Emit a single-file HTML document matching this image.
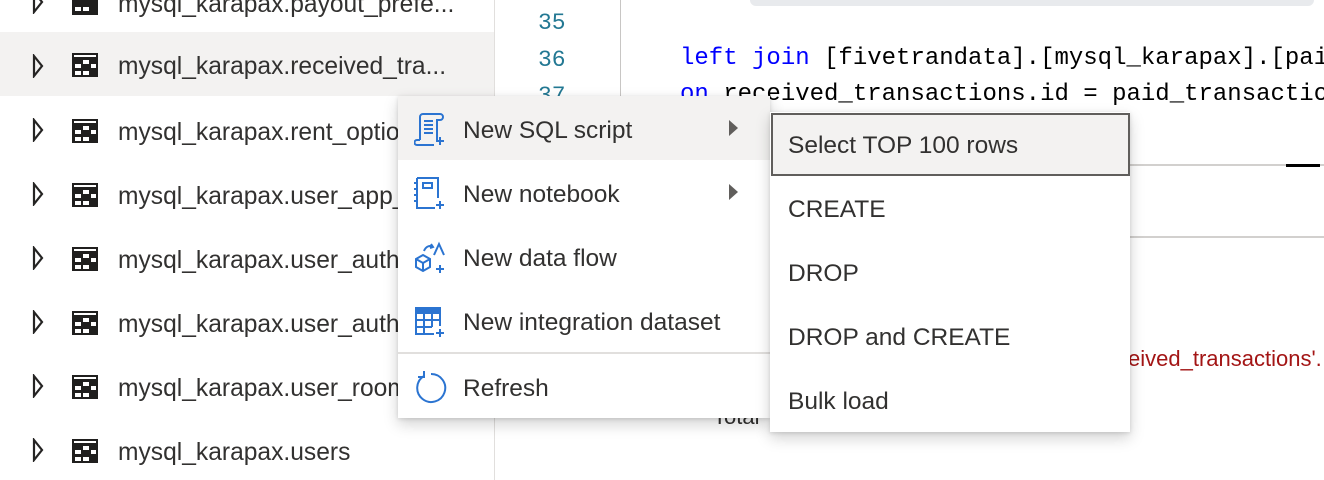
<!DOCTYPE html>
<html><head><meta charset="utf-8"><style>
*{margin:0;padding:0;box-sizing:border-box}
body{width:1324px;height:480px;overflow:hidden;background:#fff;position:relative;font-family:"Liberation Sans",sans-serif;color:#323130}
.abs{position:absolute}
.row{position:absolute;left:0;width:494px;height:64px}
.row .t{position:absolute;left:118px;top:3px;line-height:64px;font-size:24.6px;white-space:nowrap;color:#323130}
.row svg{position:absolute}
.code{font-family:"Liberation Mono",monospace;font-size:24px;white-space:pre;position:absolute;color:#000}
.ln{font-family:"Liberation Mono",monospace;font-size:23px;color:#237893;position:absolute;left:538px}
.mi{position:absolute;left:398px;width:372px;height:64px}
.mi .t{position:absolute;left:65px;top:3px;line-height:64px;font-size:24.5px;color:#323130;white-space:nowrap}
.mi svg{position:absolute;left:16px;top:17px}
.arr{position:absolute;left:331px;top:24px;width:0;height:0;border-top:8px solid transparent;border-bottom:8px solid transparent;border-left:9px solid #605e5c}
.si{position:absolute;left:770px;width:360px;height:64px}
.si .t{position:absolute;left:18px;top:1px;line-height:64px;font-size:24.5px;color:#323130;white-space:nowrap}
#clip{position:absolute;left:0;top:0;width:1324px;height:480px;overflow:hidden}
</style></head><body><div id="clip">
<div class="abs" style="left:494px;top:0;width:1px;height:480px;background:#e1dfdd"></div>
<div class="row" style="top:-30px"><svg style="left:32px;top:20px" width="12" height="24"><path d="M2 2 L10 12 L2 22 Z" fill="none" stroke="#252423" stroke-width="2.2"/></svg><svg style="left:72px;top:21px" width="26" height="24"><rect width="26" height="24" fill="#201f1e"/><rect x="2" y="2" width="22" height="2" fill="#fff"/><rect x="3" y="16" width="6" height="4" fill="#fff"/><rect x="11" y="16" width="6" height="4" fill="#fff"/></svg><div class="t">mysql_karapax.payout_prefe...</div></div>
<div class="row" style="top:32px;background:#f3f2f1"><svg style="left:32px;top:22px" width="12" height="24"><path d="M2 2 L10 12 L2 22 Z" fill="none" stroke="#252423" stroke-width="2.2"/></svg><svg style="left:72px;top:21px" width="26" height="24"><rect width="26" height="24" fill="#201f1e"/><rect x="2" y="2" width="22" height="2" fill="#fff"/><rect x="11" y="7" width="6" height="4" fill="#fff"/><rect x="19" y="11" width="5" height="4" fill="#fff"/><rect x="3" y="11" width="6" height="4" fill="#fff"/><rect x="3" y="18" width="6" height="4" fill="#fff"/><rect x="11" y="18" width="6" height="4" fill="#fff"/></svg><div class="t">mysql_karapax.received_tra...</div></div>
<div class="row" style="top:98px"><svg style="left:32px;top:20px" width="12" height="24"><path d="M2 2 L10 12 L2 22 Z" fill="none" stroke="#252423" stroke-width="2.2"/></svg><svg style="left:72px;top:21px" width="26" height="24"><rect width="26" height="24" fill="#201f1e"/><rect x="2" y="2" width="22" height="2" fill="#fff"/><rect x="11" y="7" width="6" height="4" fill="#fff"/><rect x="19" y="11" width="5" height="4" fill="#fff"/><rect x="3" y="11" width="6" height="4" fill="#fff"/><rect x="3" y="18" width="6" height="4" fill="#fff"/><rect x="11" y="18" width="6" height="4" fill="#fff"/></svg><div class="t">mysql_karapax.rent_options</div></div>
<div class="row" style="top:162px"><svg style="left:32px;top:20px" width="12" height="24"><path d="M2 2 L10 12 L2 22 Z" fill="none" stroke="#252423" stroke-width="2.2"/></svg><svg style="left:72px;top:21px" width="26" height="24"><rect width="26" height="24" fill="#201f1e"/><rect x="2" y="2" width="22" height="2" fill="#fff"/><rect x="11" y="7" width="6" height="4" fill="#fff"/><rect x="19" y="11" width="5" height="4" fill="#fff"/><rect x="3" y="11" width="6" height="4" fill="#fff"/><rect x="3" y="18" width="6" height="4" fill="#fff"/><rect x="11" y="18" width="6" height="4" fill="#fff"/></svg><div class="t">mysql_karapax.user_app_</div></div>
<div class="row" style="top:226px"><svg style="left:32px;top:20px" width="12" height="24"><path d="M2 2 L10 12 L2 22 Z" fill="none" stroke="#252423" stroke-width="2.2"/></svg><svg style="left:72px;top:21px" width="26" height="24"><rect width="26" height="24" fill="#201f1e"/><rect x="2" y="2" width="22" height="2" fill="#fff"/><rect x="11" y="7" width="6" height="4" fill="#fff"/><rect x="19" y="11" width="5" height="4" fill="#fff"/><rect x="3" y="11" width="6" height="4" fill="#fff"/><rect x="3" y="18" width="6" height="4" fill="#fff"/><rect x="11" y="18" width="6" height="4" fill="#fff"/></svg><div class="t">mysql_karapax.user_auth</div></div>
<div class="row" style="top:290px"><svg style="left:32px;top:20px" width="12" height="24"><path d="M2 2 L10 12 L2 22 Z" fill="none" stroke="#252423" stroke-width="2.2"/></svg><svg style="left:72px;top:21px" width="26" height="24"><rect width="26" height="24" fill="#201f1e"/><rect x="2" y="2" width="22" height="2" fill="#fff"/><rect x="11" y="7" width="6" height="4" fill="#fff"/><rect x="19" y="11" width="5" height="4" fill="#fff"/><rect x="3" y="11" width="6" height="4" fill="#fff"/><rect x="3" y="18" width="6" height="4" fill="#fff"/><rect x="11" y="18" width="6" height="4" fill="#fff"/></svg><div class="t">mysql_karapax.user_auth</div></div>
<div class="row" style="top:354px"><svg style="left:32px;top:20px" width="12" height="24"><path d="M2 2 L10 12 L2 22 Z" fill="none" stroke="#252423" stroke-width="2.2"/></svg><svg style="left:72px;top:21px" width="26" height="24"><rect width="26" height="24" fill="#201f1e"/><rect x="2" y="2" width="22" height="2" fill="#fff"/><rect x="11" y="7" width="6" height="4" fill="#fff"/><rect x="19" y="11" width="5" height="4" fill="#fff"/><rect x="3" y="11" width="6" height="4" fill="#fff"/><rect x="3" y="18" width="6" height="4" fill="#fff"/><rect x="11" y="18" width="6" height="4" fill="#fff"/></svg><div class="t">mysql_karapax.user_room</div></div>
<div class="row" style="top:418px"><svg style="left:32px;top:20px" width="12" height="24"><path d="M2 2 L10 12 L2 22 Z" fill="none" stroke="#252423" stroke-width="2.2"/></svg><svg style="left:72px;top:21px" width="26" height="24"><rect width="26" height="24" fill="#201f1e"/><rect x="2" y="2" width="22" height="2" fill="#fff"/><rect x="11" y="7" width="6" height="4" fill="#fff"/><rect x="19" y="11" width="5" height="4" fill="#fff"/><rect x="3" y="11" width="6" height="4" fill="#fff"/><rect x="3" y="18" width="6" height="4" fill="#fff"/><rect x="11" y="18" width="6" height="4" fill="#fff"/></svg><div class="t">mysql_karapax.users</div></div>

<div class="abs" style="left:620px;top:0;width:1px;height:110px;background:#c8c6c4"></div>
<div class="abs" style="left:750px;top:-10px;width:564px;height:16px;background:#e8eaed;border-radius:6px"></div>
<div class="ln" style="top:10px">35</div>
<div class="ln" style="top:47px">36</div>
<div class="ln" style="top:83px">37</div>
<div class="code" style="left:680px;top:45px"><span style="color:#0000ff">left join</span> [fivetrandata].[mysql_karapax].[pai</div>
<div class="code" style="left:680px;top:81px"><span style="color:#0000ff">on</span> received_transactions.id = paid_transactio</div>
<div class="abs" style="left:1130px;top:164px;width:194px;height:2px;background:#d2d0ce"></div>
<div class="abs" style="left:1286px;top:164px;width:34px;height:3px;background:#000"></div>
<div class="abs" style="left:1130px;top:236px;width:194px;height:2px;background:#d2d0ce"></div>
<div class="abs" style="left:1128px;top:346px;font-size:22px;color:#a31515;white-space:nowrap">eived_transactions'.</div>
<div class="abs" style="left:713px;top:404px;font-size:22px;color:#323130">Total</div>

<div class="abs" style="left:398px;top:96px;width:372px;height:322px;background:#fff;box-shadow:0 6px 14px rgba(0,0,0,.18),0 1px 4px rgba(0,0,0,.12)"></div>
<div class="mi" style="top:96px;background:#f3f2f1"><svg width="32" height="34" viewBox="0 0 32 34" fill="none" stroke="#2b74d1" stroke-width="2"><path d="M6 27V4a3 3 0 0 1 3-3h17a3 3 0 0 1 0 6h-3v20"/><path d="M6 27H3a2 2 0 0 0 0 5h17"/><path d="M10 8h9M10 12h9M10 16h9M10 20h9"/><path d="M26 24v8M22 28h8"/></svg><div class="t">New SQL script</div><div class="arr"></div></div>
<div class="mi" style="top:160px"><svg width="32" height="34" viewBox="0 0 32 34" fill="none" stroke="#2b74d1" stroke-width="2"><path d="M3 1h21v20M21 31H3V1"/><rect x="9" y="6" width="9" height="5"/><path d="M0 6h3M0 12h3M0 18h3M0 24h3"/><path d="M26 24v8M22 28h8"/></svg><div class="t">New notebook</div><div class="arr"></div></div>
<div class="mi" style="top:224px"><svg width="32" height="34" viewBox="0 0 32 34" fill="none" stroke="#2b74d1" stroke-width="2"><path d="M2 18l7-4 7 4v8l-7 4-7-4z M2 18l7 4 7-4 M9 22v8"/><path d="M10 10c2-5 6-6 9-4 M17 3l2 3-3 1"/><path d="M20 14l5-11 5 11"/><path d="M26 24v8M22 28h8"/></svg><div class="t">New data flow</div></div>
<div class="mi" style="top:288px"><svg width="32" height="34" viewBox="0 0 32 34" fill="none" stroke="#2b74d1" stroke-width="2"><path d="M26 21V3H2v26h18"/><rect x="2" y="3" width="24" height="5" fill="#2b74d1"/><path d="M10 8v21M18 8v14M2 15h24M2 22h16"/><path d="M26 24v8M22 28h8"/></svg><div class="t">New integration dataset</div></div>
<div class="abs" style="left:398px;top:352px;width:372px;height:2px;background:#e1dfdd"></div>
<div class="mi" style="top:354px"><svg width="34" height="34" viewBox="0 0 34 34" fill="none" stroke="#2b74d1" stroke-width="2"><path d="M10 5A14 14 0 1 0 17 3"/><path d="M10 0v6h-6"/></svg><div class="t">Refresh</div></div>

<div class="abs" style="left:770px;top:112px;width:360px;height:320px;background:#fff;box-shadow:0 6px 14px rgba(0,0,0,.18),0 1px 4px rgba(0,0,0,.12)"></div>
<div class="abs" style="left:771px;top:113px;width:359px;height:63px;background:#f3f2f1;border:2px solid #605e5c"></div>
<div class="si" style="top:113px"><div class="t">Select TOP 100 rows</div></div>
<div class="si" style="top:177px"><div class="t">CREATE</div></div>
<div class="si" style="top:241px"><div class="t">DROP</div></div>
<div class="si" style="top:305px"><div class="t">DROP and CREATE</div></div>
<div class="si" style="top:369px"><div class="t">Bulk load</div></div>
</div></body></html>
